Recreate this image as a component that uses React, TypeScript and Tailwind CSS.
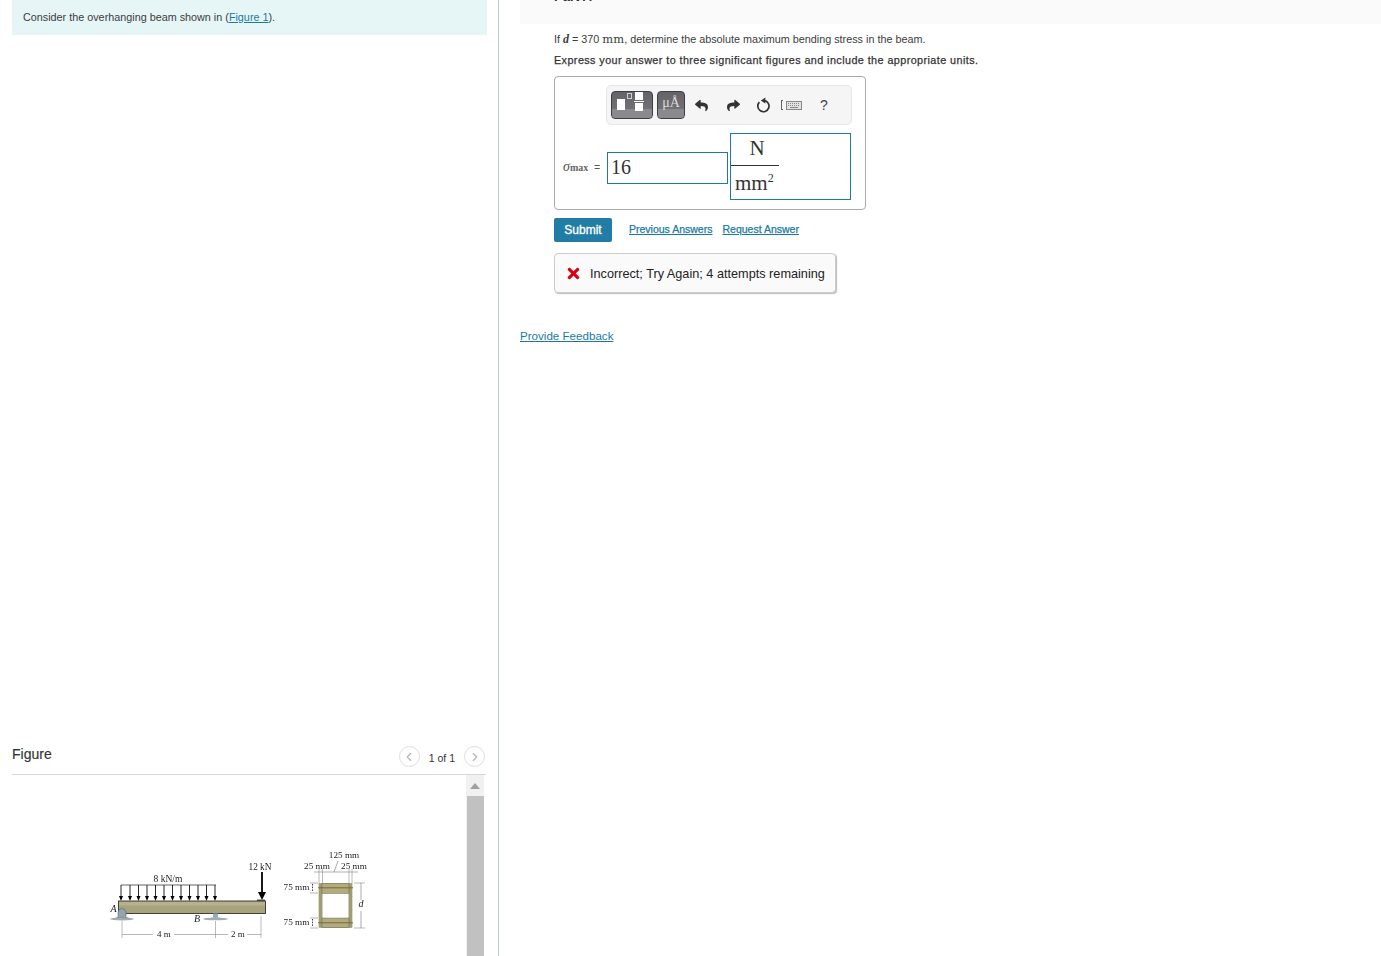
import { FaReply, FaShare, FaTimes } from "react-icons/fa";
import { FiChevronLeft, FiChevronRight } from "react-icons/fi";

const loadArrows = [21, 30, 38.5, 47, 55.5, 64, 72.5, 81, 89.5, 98, 106.5, 115];

// the beam drawing, in the px of the crop around it
function BeamFigure() {
    const serif = { fontFamily: '"Liberation Serif", serif' };
    return (
        <svg width="290" height="116" viewBox="0 0 290 116" className="blur-[0.5px]" style={serif}>
            <line x1="21" y1="45" x2="116" y2="45" stroke="#222" strokeWidth="0.7" />
            {loadArrows.map((x) => (
                <g key={x}>
                    <line x1={x} y1="45" x2={x} y2="57" stroke="#111" strokeWidth="0.9" />
                    <polygon points={`${x - 2},56 ${x + 2},56 ${x},61`} fill="#000" />
                </g>
            ))}
            <text x="68" y="42" fontSize="9.5" textAnchor="middle" fill="#222">8 kN/m</text>
            <text x="160" y="29.5" fontSize="9.3" textAnchor="middle" fill="#222">12 kN</text>
            <line x1="162" y1="32" x2="162" y2="55" stroke="#000" strokeWidth="1.8" />
            <polygon points="158,52 166,52 162,60" fill="#000" />
            <rect x="157" y="59.5" width="8" height="1.6" fill="#555" />

            <rect x="18.5" y="61" width="147" height="12.5" fill="#a9a27e" stroke="#33332a" strokeWidth="0.9" />
            <rect x="19" y="62" width="146" height="3.5" fill="#b8b18e" />

            <text x="10.5" y="72" fontSize="10" fontStyle="italic" fill="#222">A</text>
            <path d="M18 78 L18 72 Q19 68.5 22 68.5 Q25 68.5 26 72 L26 78 Z" fill="#8fa7ad" stroke="#556" strokeWidth="0.5" />
            <path d="M12 79 Q22 74.5 32 79 Z" fill="#7e8a8c" />
            <ellipse cx="22" cy="79" rx="12" ry="1.4" fill="#a3adaf" />
            <line x1="22" y1="81" x2="22" y2="98" stroke="#777" strokeWidth="0.5" />

            <text x="94" y="82" fontSize="10" fontStyle="italic" fill="#222">B</text>
            <rect x="113" y="73.5" width="5" height="3.5" fill="#8fb0b8" />
            <path d="M107 79 Q115.5 75.5 124 79 Z" fill="#7e8a8c" />
            <ellipse cx="115.5" cy="79" rx="12.5" ry="1.3" fill="#a3adaf" />
            <line x1="115.5" y1="81" x2="115.5" y2="98" stroke="#777" strokeWidth="0.5" />

            <line x1="22" y1="94.5" x2="161" y2="94.5" stroke="#888" strokeWidth="0.6" />
            <line x1="161" y1="76" x2="161" y2="98" stroke="#777" strokeWidth="0.5" />
            <rect x="53" y="90" width="21" height="9" fill="#fff" />
            <text x="64" y="96.8" fontSize="9" textAnchor="middle" fill="#222">4 m</text>
            <rect x="128" y="90" width="19" height="9" fill="#fff" />
            <text x="138" y="96.8" fontSize="9" textAnchor="middle" fill="#222">2 m</text>

            <text x="244" y="17.5" fontSize="9.2" textAnchor="middle" fill="#222">125 mm</text>
            <text x="217" y="29" fontSize="9.2" textAnchor="middle" fill="#222">25 mm</text>
            <text x="254" y="29" fontSize="9.2" textAnchor="middle" fill="#222">25 mm</text>
            <path d="M234 32 L238 21" stroke="#555" strokeWidth="0.5" fill="none" />
            <line x1="214" y1="32" x2="258" y2="32" stroke="#666" strokeWidth="0.5" />
            <line x1="219" y1="29" x2="219" y2="43" stroke="#777" strokeWidth="0.5" />
            <line x1="222.5" y1="29" x2="222.5" y2="43" stroke="#777" strokeWidth="0.5" />
            <line x1="249" y1="29" x2="249" y2="43" stroke="#777" strokeWidth="0.5" />
            <line x1="252" y1="29" x2="252" y2="43" stroke="#777" strokeWidth="0.5" />

            <rect x="219" y="43.5" width="33" height="44" fill="#fff" stroke="#8a8868" strokeWidth="0.6" />
            <rect x="219" y="43.5" width="3.5" height="44" fill="#a09c78" />
            <rect x="248.5" y="43.5" width="3.5" height="44" fill="#a09c78" />
            <rect x="222" y="43.5" width="27" height="10" fill="#b3ab80" stroke="#55553a" strokeWidth="0.4" />
            <rect x="222" y="78" width="27" height="9.5" fill="#b3ab80" stroke="#55553a" strokeWidth="0.4" />
            <rect x="218" y="47.3" width="35" height="1" fill="#7a6a30" />
            <rect x="218" y="82.3" width="35" height="1" fill="#7a6a30" />

            <text x="196.5" y="50" fontSize="9.2" textAnchor="middle" fill="#222">75 mm</text>
            <text x="196.5" y="85" fontSize="9.2" textAnchor="middle" fill="#222">75 mm</text>
            <line x1="210" y1="43" x2="218" y2="43" stroke="#666" strokeWidth="0.5" />
            <line x1="210" y1="53" x2="218" y2="53" stroke="#666" strokeWidth="0.5" />
            <line x1="210" y1="78" x2="218" y2="78" stroke="#666" strokeWidth="0.5" />
            <line x1="210" y1="88" x2="218" y2="88" stroke="#666" strokeWidth="0.5" />
            <line x1="212.5" y1="44" x2="212.5" y2="52" stroke="#222" strokeWidth="0.9" strokeDasharray="1.5 1.2" />
            <line x1="212.5" y1="79" x2="212.5" y2="87" stroke="#222" strokeWidth="0.9" strokeDasharray="1.5 1.2" />

            <line x1="254" y1="43" x2="265" y2="43" stroke="#777" strokeWidth="0.5" />
            <line x1="254" y1="88" x2="265" y2="88" stroke="#777" strokeWidth="0.5" />
            <line x1="261" y1="43" x2="261" y2="60" stroke="#555" strokeWidth="0.5" />
            <line x1="261" y1="71" x2="261" y2="88" stroke="#555" strokeWidth="0.5" />
            <text x="261" y="67" fontSize="10" fontStyle="italic" textAnchor="middle" fill="#222">d</text>
        </svg>
    );
}

function ToolButton({ width, children }: { width: string; children: React.ReactNode }) {
    return (
        <div className={`${width} h-7 rounded-[4px] border border-[#3e3e42] bg-gradient-to-b from-[#646468] to-[#78787c] flex items-start justify-center overflow-hidden relative`}>
            <div className="absolute left-0 right-0 bottom-0 h-[9px] bg-[#8a8a8e]" />
            {children}
        </div>
    );
}

function Toolbar() {
    return (
        <div className="ml-[51px] w-[246px] h-10 rounded-[5px] border border-[#e6e6e6] bg-[#f5f5f5] flex items-center pl-1">
            <ToolButton width="w-[42px]">
                <div className="relative w-full h-full">
                    <div className="absolute left-[5px] top-[7px] w-2 h-[11px] bg-white" />
                    <div className="absolute left-[15px] top-[1px] w-[5px] h-[6px] border border-[#cfcfcf]" />
                    <div className="absolute left-[23px] top-0 w-2 h-2 bg-white" />
                    <div className="absolute left-[22px] top-[9px] w-[10px] h-px bg-white" />
                    <div className="absolute left-[23px] top-[11px] w-2 h-2 bg-white" />
                </div>
            </ToolButton>
            <div className="ml-1">
                <ToolButton width="w-7">
                    <span className="relative text-[#dcdcdc] text-[14px] leading-[22px] font-['Liberation_Serif',serif]">μÅ</span>
                </ToolButton>
            </div>
            <FaReply className="ml-[10px] text-[#333]" size={13} />
            <FaShare className="ml-[19px] text-[#333]" size={13} />
            <svg className="ml-4" width="15" height="16" viewBox="0 0 15 16" fill="none">
                <path d="M3.4 5.2 A5.6 5.6 0 1 0 8.4 3.6" stroke="#333" strokeWidth="1.7" />
                <polygon points="9.4,0.6 9.4,6.6 4.8,3.6" fill="#333" />
            </svg>
            <span className="ml-[10px] w-[2px] h-[10px] border-l border-y border-[#666]" />
            <svg className="ml-[3px]" width="16" height="9" viewBox="0 0 16 9">
                <rect x="0.5" y="0.5" width="15" height="8" fill="#e2e2e2" stroke="#888" />
                <path d="M2 2.5h12M2 4.5h12" stroke="#888" strokeWidth="1" strokeDasharray="1 1" />
                <path d="M4 6.5h8" stroke="#888" strokeWidth="1" />
            </svg>
            <span className="ml-[18px] text-[#444] text-[14px] leading-none">?</span>
        </div>
    );
}

export default function App() {
    return (
        <div className="h-[956px] w-[1381px] overflow-hidden flex bg-white text-[#333] font-['Liberation_Sans',sans-serif] text-[10.8px]">
            <div className="w-[499px] h-full shrink-0 flex flex-col border-r border-[#bccbdc] pl-3">
                <div className="w-[475px] h-[35px] bg-[#e6f6f7] pl-[11px] pt-[11px] leading-[13px] text-[#3c3c3c]">
                    Consider the overhanging beam shown in (<span className="text-[#1a7aa3] underline">Figure 1</span>).
                </div>

                <div className="flex-1" />

                <div className="w-[474px] h-[40px] flex items-center border-b border-[#d9d9d9] pt-1">
                    <span className="text-[14px] text-[#333] -mt-[5px] [-webkit-text-stroke:0.15px_#333]">Figure</span>
                    <div className="ml-auto mr-px flex items-center">
                        <div className="w-[21px] h-[21px] rounded-full border border-[#dedede] flex items-center justify-center">
                            <FiChevronLeft className="text-[#b5b5b5]" size={14} />
                        </div>
                        <span className="mx-[9px] pt-1 text-[10.5px] text-[#333]">1 of 1</span>
                        <div className="w-[21px] h-[21px] rounded-full border border-[#dedede] flex items-center justify-center">
                            <FiChevronRight className="text-[#b5b5b5]" size={14} />
                        </div>
                    </div>
                </div>

                <div className="w-[472px] h-[181px] flex">
                    <div className="flex-1 pl-[88px] pt-[65px]">
                        <BeamFigure />
                    </div>
                    <div className="w-[18px] bg-[#f1f1f1] flex flex-col items-center">
                        <div className="h-[21px] flex items-center justify-center">
                            <div className="w-0 h-0 border-x-[5px] border-x-transparent border-b-[6px] border-b-[#a0a0a0]" />
                        </div>
                        <div className="w-[17px] flex-1 bg-[#c1c1c1]" />
                    </div>
                </div>
            </div>

            <div className="flex-1 pl-[21px]">
                <div className="h-6 bg-[#fafafa] overflow-hidden pl-[34px]">
                    <div className="-mt-[11px] text-[13px] leading-[15px] font-bold text-[#333]">Part A</div>
                </div>
                <div className="pl-[34px]">
                    <p className="mt-[9px] leading-[13px] text-[#3c3c3c]">
                        If <span className="italic font-bold font-['Liberation_Serif',serif] text-[12px]">d</span> = 370 <span className="font-['DejaVu_Serif',serif] text-[11.5px]">mm</span>, determine the absolute maximum bending stress in the beam.
                    </p>
                    <p className="mt-2 leading-[13px] tracking-[0.42px] text-[#333] [-webkit-text-stroke:0.25px_#333]">
                        Express your answer to three significant figures and include the appropriate units.
                    </p>

                    <div className="mt-[9px] w-[312px] h-[134px] border border-[#aaa] rounded-[4px] pt-2">
                        <Toolbar />
                        <div className="flex items-center mt-2 pl-2 font-['Liberation_Serif',serif]">
                            <span className="w-11 text-[#555] flex items-baseline">
                                <span className="italic text-[14px]">σ</span>
                                <span className="font-bold text-[10px] text-[#666]">max</span>
                                <span className="ml-[6px] text-[10px] font-['Liberation_Sans',sans-serif]">=</span>
                            </span>
                            <div className="w-[121px] h-8 mt-[2px] border border-[#1f7aa0] pl-[3px] text-[20px] leading-[28px] text-[#333]">16</div>
                            <div className="ml-[2px] w-[121px] h-[67px] border border-[#1f7aa0] flex flex-col text-[21px] text-[#333]">
                                <div className="w-12 h-8 shrink-0 border-b border-[#333] text-center leading-[29px] pl-1">N</div>
                                <div className="pl-1 pt-[2px] leading-[31px]">mm<sup className="text-[12px] -top-[8px]">2</sup></div>
                            </div>
                        </div>
                    </div>

                    <div className="mt-2 flex items-center">
                        <div className="w-[58px] h-6 rounded-[2px] bg-[#217da5] text-white text-[12px] flex items-center justify-center [-webkit-text-stroke:0.3px_#fff]">Submit</div>
                        <span className="ml-[17px] text-[10.5px] text-[#1a7aa3] underline [-webkit-text-stroke:0.25px_#1a7aa3]">Previous Answers</span>
                        <span className="ml-[10px] text-[10.5px] text-[#1a7aa3] underline [-webkit-text-stroke:0.25px_#1a7aa3]">Request Answer</span>
                    </div>

                    <div className="mt-[11px] w-[282px] h-10 rounded-[4px] border border-[#ccc] bg-[#fafafa] shadow-[1px_1px_1px_#bbb] flex items-center pl-[10px]">
                        <FaTimes className="text-[#d90012]" size={17} />
                        <span className="ml-2 pt-1 text-[12.7px] text-[#222]">Incorrect; Try Again; 4 attempts remaining</span>
                    </div>
                </div>
                <div className="mt-9 text-[11.6px] leading-[14px] text-[#1a7aa3] underline">Provide Feedback</div>
            </div>
        </div>
    );
}
